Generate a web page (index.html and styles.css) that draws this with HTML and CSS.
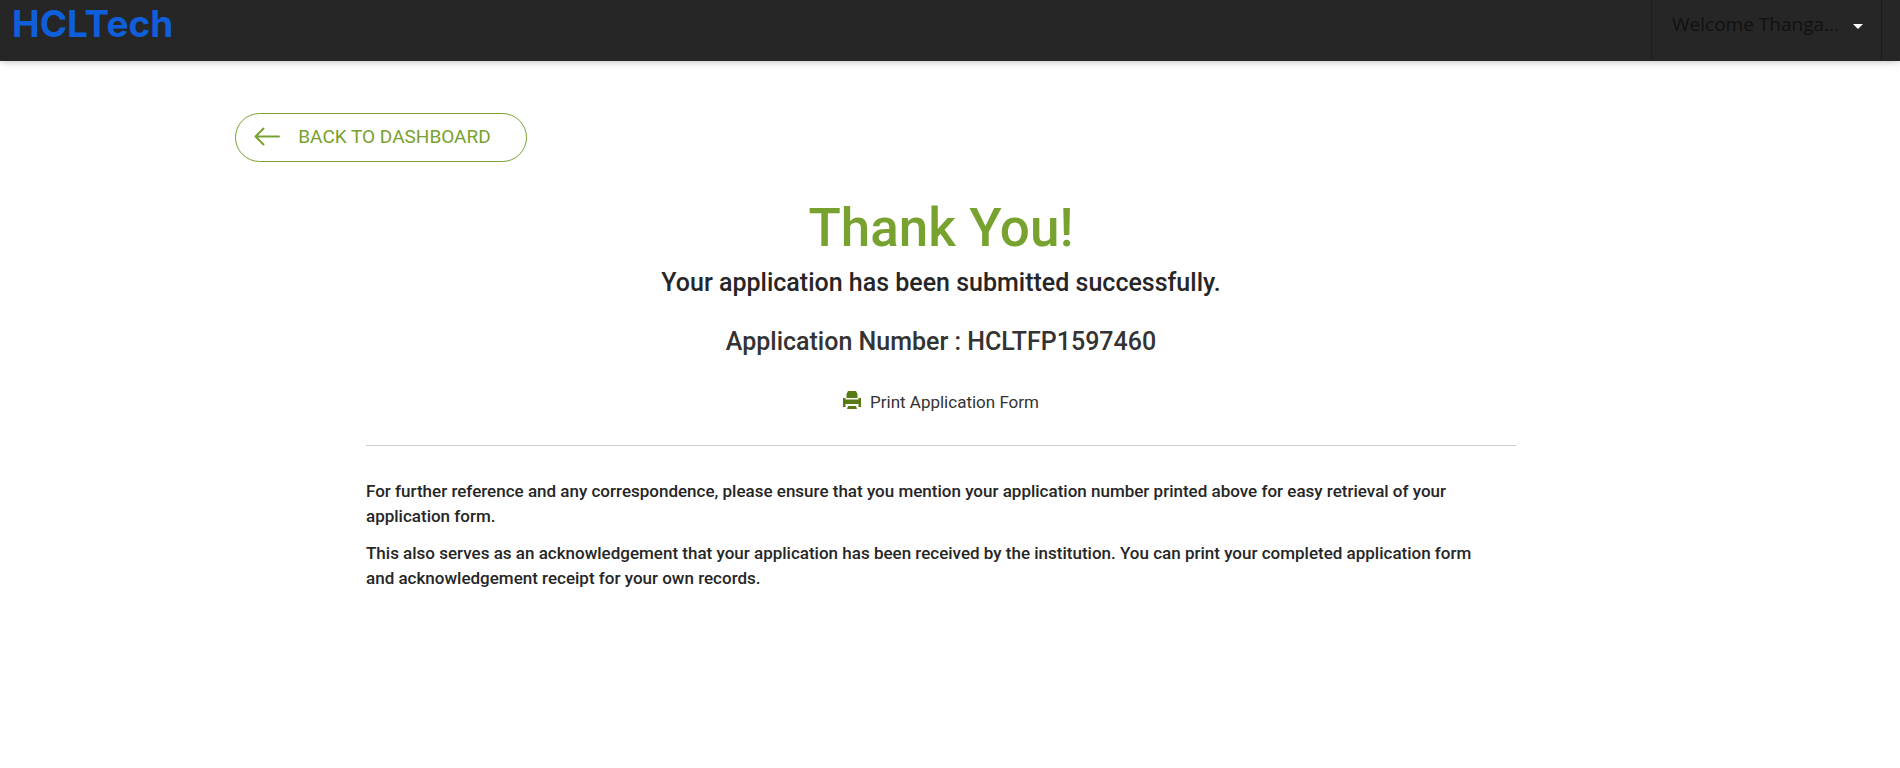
FILE: index.html
```
<!DOCTYPE html>
<html lang="en">
<head>
<meta charset="utf-8">
<title>Application Submitted</title>
<link rel="stylesheet" href="styles.css">
</head>
<body>
<header class="topbar">
  <a class="logo" href="#">HCLTech</a>
  <button class="user-menu" type="button">
    <span>Welcome Thanga...</span>
    <span class="caret"></span>
  </button>
</header>
<main class="page">
  <div class="container">
    <a class="back" href="#">
      <svg class="back-icon" width="26" height="20" viewBox="0 0 26 20" fill="none" stroke="currentColor" stroke-width="2" stroke-linecap="round" stroke-linejoin="round" aria-hidden="true"><path d="M9.500 1.500 1.500 9.500l8 8M1.500 9.500H25"/></svg>
      BACK TO DASHBOARD
    </a>
    <section class="content">
      <div class="summary">
        <h1 class="title">Thank You!</h1>
        <p class="lead">Your application has been submitted successfully.</p>
        <p class="number">Application Number : HCLTFP1597460</p>
        <a class="print" href="#">
          <svg width="18" height="22" viewBox="0 0 18 22" fill="#597b17" aria-hidden="true"><path d="M5 0h8l1.500 3v4h-11V3zM0 7h2.500v2h13V7H18v9h-2.500v-3h-13v3H0zM2.500 8.500h13v4.500h-13zM5 15h8l1 3H4z"/></svg>
          Print Application Form
        </a>
      </div>
      <div class="notes">
        <p>For further reference and any correspondence, please ensure that you mention your application number printed above for easy retrieval of your application form.</p>
        <p>This also serves as an acknowledgement that your application has been received by the institution. You can print your completed application form and&nbsp;acknowledgement receipt for your own records.</p>
      </div>
    </section>
  </div>
</main>
</body>
</html>
```
FILE: styles.css
```
* { box-sizing: border-box; }
body {
  margin: 0;
  background: #fff;
  color: #262626;
  font-family: Roboto, "Liberation Sans", sans-serif;
}
a { color: inherit; text-decoration: none; }
h1, p { margin: 0; }

.topbar {
  display: flex;
  justify-content: space-between;
  height: 61px;
  padding: 0 18px 0 12px;
  background: #262626;
  box-shadow: 0 0 8px rgba(0, 0, 0, 0.3);
}
.logo {
  color: #0f5fdc;
  font: 700 37px/48px Inter, "Liberation Sans", sans-serif;
}
.user-menu {
  display: flex;
  align-items: flex-start;
  gap: 14px;
  padding: 11px 18px 0 20px;
  border: solid #1c1c1c;
  border-width: 0 1px;
  background: none;
  color: #111;
  font: 19px/27px "Open Sans", "Noto Sans", sans-serif;
}
.caret {
  margin-top: 13px;
  border: 5px solid transparent;
  border-top-color: #fff;
  border-bottom: 0;
}

.page { padding: 52px 18px 40px 0; }
.container { width: 75%; margin: 0 auto; }
.back {
  display: inline-flex;
  align-items: center;
  gap: 18px;
  padding: 11px 35px 13px 18px;
  border: 1px solid #78a22f;
  border-radius: 25px;
  color: #78a22f;
  font-size: 19px;
  line-height: 23px;
}
.content { max-width: 1150px; margin: 36px auto 0; }
.summary {
  display: flex;
  flex-direction: column;
  align-items: center;
  padding-bottom: 31px;
  border-bottom: 1px solid #ccc;
}
.title { color: #78a22f; font-size: 53px; font-weight: 500; line-height: 60px; }
.lead, .number { font-size: 25px; font-weight: 500; line-height: 30px; }
.lead { margin-top: 10px; }
.number { margin-top: 29px; color: #333; }
.print {
  display: flex;
  align-items: center;
  gap: 9px;
  margin-top: 33px;
  color: #333;
  font-size: 17px;
  line-height: 24px;
}
.notes {
  display: grid;
  gap: 12px;
  margin-top: 33px;
  font-size: 17px;
  font-weight: 500;
  line-height: 25px;
}
```
